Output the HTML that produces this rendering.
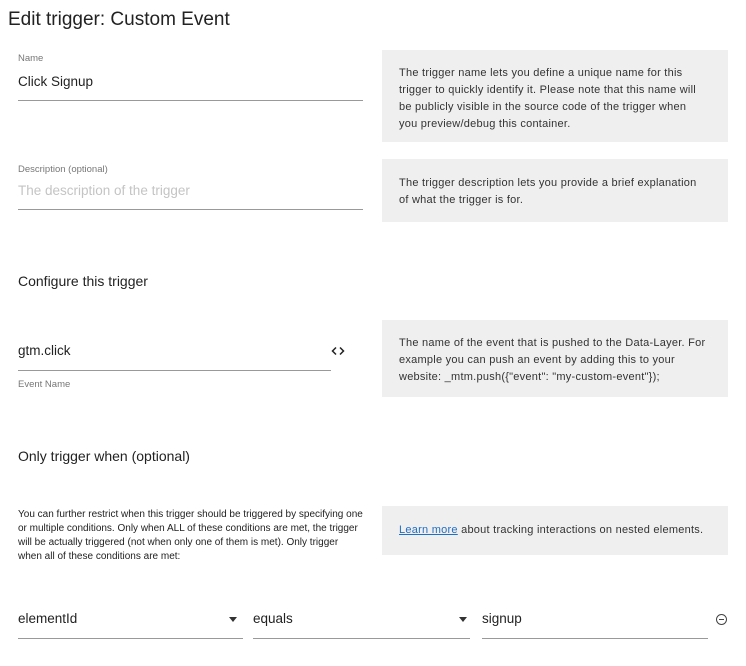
<!DOCTYPE html>
<html><head><meta charset="utf-8"><style>
body{margin:0;width:746px;height:666px;background:#fff;font-family:"Liberation Sans",sans-serif;color:#222;position:relative;overflow:hidden}
.a{position:absolute;white-space:nowrap}
.lbl{font-size:9.5px;color:#777}
.v{font-size:13.5px;color:#222}
.ln{position:absolute;height:1px;background:#999}
.box{position:absolute;left:382px;width:346px;background:#efefef;font-size:11px;letter-spacing:0.25px;line-height:17px;color:#333;box-sizing:border-box;padding-left:17px;white-space:nowrap}
.h{font-size:14px;color:#222}
.arr{position:absolute;width:0;height:0;border-left:4px solid transparent;border-right:4px solid transparent;border-top:5px solid #333}
</style></head><body>
<div class="a" style="left:8px;top:9px;font-size:19px;color:#222">Edit trigger: Custom Event</div>

<div class="a lbl" style="left:18px;top:53px">Name</div>
<div class="a v" style="left:18px;top:74px">Click Signup</div>
<div class="ln" style="left:18px;top:100px;width:345px"></div>
<div class="box" style="top:50px;height:92px;padding-top:15px">The trigger name lets you define a unique name for this<br>trigger to quickly identify it. Please note that this name will<br>be publicly visible in the source code of the trigger when<br>you preview/debug this container.</div>

<div class="a lbl" style="left:18px;top:164px">Description (optional)</div>
<div class="a v" style="left:18px;top:183px;color:#c4c4c4">The description of the trigger</div>
<div class="ln" style="left:18px;top:209px;width:345px"></div>
<div class="box" style="top:159px;height:63px;padding-top:16px">The trigger description lets you provide a brief explanation<br>of what the trigger is for.</div>

<div class="a h" style="left:18px;top:273px">Configure this trigger</div>

<div class="a v" style="left:18px;top:343px">gtm.click</div>
<svg class="a" style="left:331px;top:346px" width="14" height="10" viewBox="0 0 14 10"><path d="M5 1.5 1.5 5 5 8.5M9 1.5 12.5 5 9 8.5" fill="none" stroke="#222" stroke-width="1.5"/></svg>
<div class="ln" style="left:18px;top:370px;width:313px"></div>
<div class="a lbl" style="left:18px;top:379px">Event Name</div>
<div class="box" style="top:320px;height:77px;padding-top:15px">The name of the event that is pushed to the Data-Layer. For<br>example you can push an event by adding this to your<br>website: _mtm.push({"event": "my-custom-event"});</div>

<div class="a h" style="left:18px;top:448px">Only trigger when (optional)</div>

<div class="a" style="left:18px;top:508px;font-size:10px;line-height:14px;color:#222">You can further restrict when this trigger should be triggered by specifying one<br>or multiple conditions. Only when ALL of these conditions are met, the trigger<br>will be actually triggered (not when only one of them is met). Only trigger<br>when all of these conditions are met:</div>
<div class="box" style="top:506px;height:49px;padding-top:16px"><span style="color:#1f6fc6;text-decoration:underline">Learn more</span> about tracking interactions on nested elements.</div>

<div class="a v" style="left:18px;top:611px">elementId</div>
<div class="arr" style="left:229px;top:617px"></div>
<div class="ln" style="left:18px;top:638px;width:225px"></div>
<div class="a v" style="left:253px;top:611px">equals</div>
<div class="arr" style="left:459px;top:617px"></div>
<div class="ln" style="left:253px;top:638px;width:217px"></div>
<div class="a v" style="left:482px;top:611px">signup</div>
<div class="ln" style="left:482px;top:638px;width:226px"></div>
<div class="a" style="left:716px;top:614px;width:9px;height:9px;border:1.3px solid #444;border-radius:50%"></div>
<div class="a" style="left:719px;top:619px;width:5px;height:1.3px;background:#444"></div>
</body></html>
